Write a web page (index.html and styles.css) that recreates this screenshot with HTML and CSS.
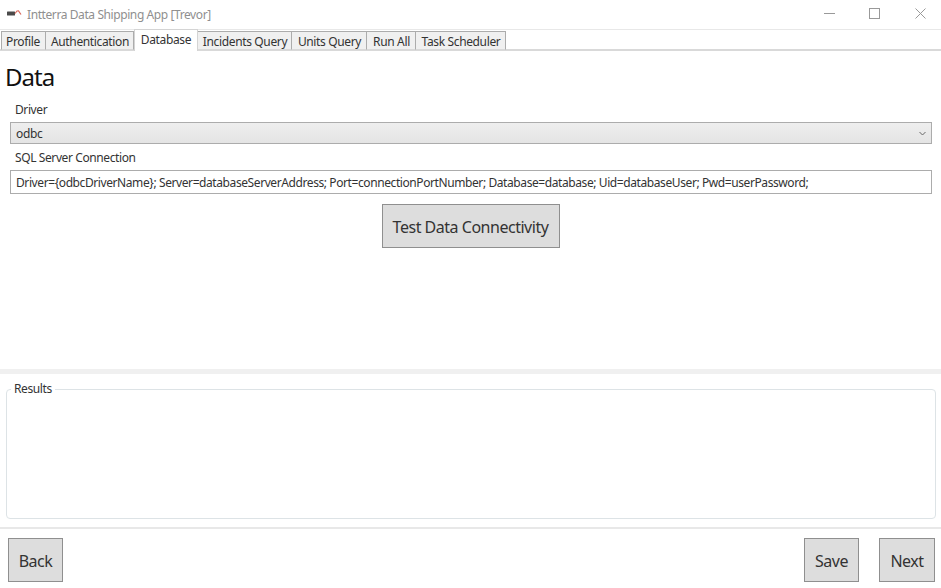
FILE: index.html
```html
<!DOCTYPE html>
<html lang="en">
<head>
<meta charset="utf-8">
<title>Intterra Data Shipping App</title>
<link rel="stylesheet" href="styles.css">
</head>
<body>
<div class="app">
  <header class="titlebar">
    <svg class="logo" width="16" height="9" viewBox="0 0 16 9"><rect x="1" y="1.5" width="8" height="4" rx="0.5" fill="#4a4a4a"/><path d="M9 3.5 L11 1 L12.5 0.8 L15 4.5" fill="none" stroke="#d9675a" stroke-width="1.2"/></svg>
    <span class="title">Intterra Data Shipping App [Trevor]</span>
    <div class="winctrls">
      <svg width="11" height="11" viewBox="0 0 11 11"><path d="M0 5.5H11" stroke="#999" stroke-width="1"/></svg>
      <svg width="11" height="11" viewBox="0 0 11 11"><rect x="0.5" y="0.5" width="10" height="10" fill="none" stroke="#999" stroke-width="1"/></svg>
      <svg width="11" height="11" viewBox="0 0 11 11"><path d="M0.5 0.5L10.5 10.5M10.5 0.5L0.5 10.5" stroke="#999" stroke-width="1"/></svg>
    </div>
  </header>
  <nav class="tabs">
    <div class="tab t1">Profile</div>
    <div class="tab t2">Authentication</div>
    <div class="tab active t3">Database</div>
    <div class="tab t4">Incidents Query</div>
    <div class="tab t5">Units Query</div>
    <div class="tab t6">Run All</div>
    <div class="tab t7">Task Scheduler</div>
  </nav>
  <main class="content">
    <h1 class="heading">Data</h1>
    <div class="form">
      <label class="label driver-label">Driver</label>
      <div class="select">
        <span>odbc</span>
        <svg width="7" height="5" viewBox="0 0 7 5"><path d="M0.5 1L3.5 4L6.5 1" fill="none" stroke="#666" stroke-width="1"/></svg>
      </div>
      <label class="label sql-label">SQL Server Connection</label>
      <div class="input">Driver={odbcDriverName}; Server=databaseServerAddress; Port=connectionPortNumber; Database=database; Uid=databaseUser; Pwd=userPassword;</div>
    </div>
    <div class="test-row"><button class="btn test">Test Data Connectivity</button></div>
  </main>
  <div class="splitter"></div>
  <section class="results-wrap">
    <fieldset class="results"><legend>Results</legend></fieldset>
  </section>
  <footer class="footer">
    <button class="btn nav back">Back</button>
    <div class="right">
      <button class="btn nav save">Save</button>
      <button class="btn nav next">Next</button>
    </div>
  </footer>
</div>
</body>
</html>
```
FILE: styles.css
```css
* { box-sizing: border-box; }
html, body { margin: 0; padding: 0; background: #fff; }
body { font-family: "Noto Sans", "Open Sans", "Liberation Sans", sans-serif; font-size: 12px; color: #222; overflow: hidden; }
.app { width: 941px; height: 588px; display: flex; flex-direction: column; }

.titlebar { height: 30px; flex: none; display: flex; align-items: center; padding-left: 6px; border-bottom: 1px solid #e8e8e8; }
.logo { flex: none; margin-right: 5px; }
.title { color: #8f8f8f; font-size: 12px; letter-spacing: -0.41px; }
.winctrls { margin-left: auto; display: flex; gap: 34px; padding: 0 15px 2px 0; align-items: center; }
.winctrls svg { display: block; }
.winctrls svg:last-child { margin-left: 1px; }

.tabs { height: 22px; flex: none; display: flex; align-items: flex-end; padding-left: 1px; border-bottom: 2px solid #d9d9d9; margin-top: -1px; position: relative; }
.tab { height: 19px; margin-bottom: -1px; padding: 1px 0 0 1px; display: flex; align-items: center; justify-content: center; background: #f0f0f0; border: 1px solid #acacac; border-left-width: 0; border-bottom: 1px solid #d9d9d9; font-size: 12px; color: #333; letter-spacing: -0.36px; white-space: nowrap; }
.tab.t1 { border-left-width: 1px; width: 45px; padding-right: 1px; padding-left: 0; }
.tab.t2 { width: 88px; }
.tab.t3 { width: 64px; }
.tab.t4 { width: 94px; }
.tab.t5 { width: 75px; }
.tab.t6 { width: 49px; }
.tab.t7 { width: 90px; }
.tab.active { height: 22px; margin-bottom: -2px; background: #fff; border: 1px solid #d4d4d4; border-bottom: 0; padding: 0 0 2px; }

.content { height: 318px; flex: none; display: flex; flex-direction: column; }
.heading { margin: 10px 0 0 5px; font-size: 24px; font-weight: 400; line-height: 32px; color: #111; letter-spacing: -0.95px; }
.form { padding: 0 9px 0 10px; display: flex; flex-direction: column; }
.label { font-size: 12px; line-height: 16px; padding-left: 5px; color: #333; letter-spacing: -0.4px; }
.driver-label { margin-top: 9px; height: 20px; }
.sql-label { margin-top: 6px; height: 20px; }
.select { height: 22px; display: flex; align-items: center; justify-content: space-between; padding: 0 5px 0 5px; border: 1px solid #acacac; background: linear-gradient(#eeeeee, #e4e4e4); font-size: 12px; color: #333; letter-spacing: -0.3px; }
.input { height: 24px; display: flex; align-items: center; padding-left: 5px; border: 1px solid #acacac; background: #fff; font-size: 12px; color: #333; letter-spacing: -0.41px; white-space: nowrap; overflow: hidden; }
.test-row { display: flex; justify-content: center; margin-top: 10px; }
.btn { font-family: inherit; background: #dddddd; border: 1px solid #8f8f8f; color: #333; padding: 1px 0 0; font-size: 16px; letter-spacing: -0.48px; }
.test { width: 178px; height: 44px; }

.splitter { height: 5px; flex: none; background: #f0f0f0; }
.results-wrap { height: 155px; flex: none; padding: 7px 5px 0 6px; border-bottom: 2px solid #e8e8e8; }
.results { margin: 0; padding: 0; height: 138px; border: 1px solid #dde3e6; border-radius: 4px; }
.results legend { font-size: 12px; line-height: 16px; margin-left: 4px; padding: 0 3px; color: #333; letter-spacing: -0.4px; }

.footer { flex: 1; display: flex; justify-content: space-between; align-items: flex-start; padding: 9px 6px 0 8px; }
.right { display: flex; gap: 20px; }
.nav { width: 55px; height: 44px; padding-top: 2px; }
.next { width: 56px; }
```
